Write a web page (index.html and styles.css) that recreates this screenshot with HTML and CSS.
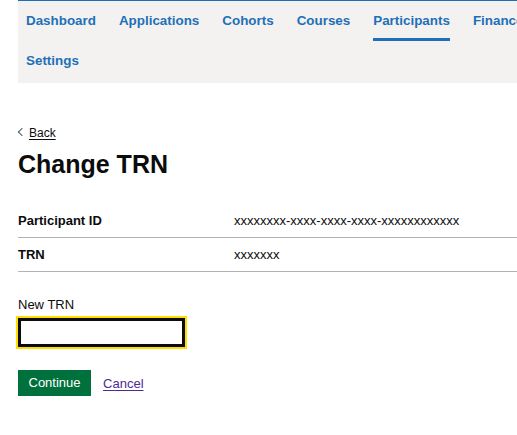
FILE: index.html
```html
<!DOCTYPE html>
<html lang="en">
<head>
<meta charset="utf-8">
<title>Change TRN</title>
<link rel="stylesheet" href="styles.css">
</head>
<body>
<nav class="subnav">
  <ul class="subnav-list">
    <li class="subnav-item"><a class="subnav-link" href="#">Dashboard</a></li>
    <li class="subnav-item"><a class="subnav-link" href="#">Applications</a></li>
    <li class="subnav-item"><a class="subnav-link" href="#">Cohorts</a></li>
    <li class="subnav-item"><a class="subnav-link" href="#">Courses</a></li>
    <li class="subnav-item"><a class="subnav-link is-current" href="#">Participants</a></li>
    <li class="subnav-item"><a class="subnav-link" href="#">Finance</a></li>
    <li class="subnav-item"><a class="subnav-link" href="#">Settings</a></li>
  </ul>
</nav>
<main class="main">
  <a class="back-link" href="#"><span class="chevron"></span>Back</a>
  <h1 class="heading">Change TRN</h1>
  <dl class="summary">
    <div class="summary-row">
      <dt class="summary-key">Participant ID</dt>
      <dd class="summary-value">xxxxxxxx-xxxx-xxxx-xxxx-xxxxxxxxxxxx</dd>
    </div>
    <div class="summary-row">
      <dt class="summary-key">TRN</dt>
      <dd class="summary-value">xxxxxxx</dd>
    </div>
  </dl>
  <form class="form">
    <label class="label" for="trn">New TRN</label>
    <input class="input" id="trn" type="text">
    <div class="actions">
      <button class="button" type="button">Continue</button>
      <a class="link" href="#">Cancel</a>
    </div>
  </form>
</main>
</body>
</html>
```

FILE: styles.css
```css
html, body {
  overflow-x: hidden;
}
body {
  margin: 0;
  font-family: "Liberation Sans", Arial, sans-serif;
  color: #0b0c0c;
  background: #fff;
}
.subnav {
  margin-left: 18px;
  width: 565px;
  background: #f3f2f1;
  border-top: 1px solid #1d70b8;
  padding: 0 0 2px 8px;
  box-sizing: border-box;
}
.subnav-list {
  list-style: none;
  margin: 0;
  padding: 0;
  display: flex;
  flex-wrap: wrap;
  column-gap: 23px;
}
.subnav-item {
  display: block;
}
.subnav-link {
  display: block;
  padding: 10px 0 7px;
  line-height: 20px;
  font-size: 13.4px;
  font-weight: bold;
  color: #1d70b8;
  text-decoration: none;
  border-bottom: 3px solid transparent;
}
.subnav-link.is-current {
  border-bottom-color: #1d70b8;
}
.main {
  padding: 0 0 0 18px;
  margin-top: 38px;
}
.back-link {
  display: inline-flex;
  align-items: center;
  font-size: 12px;
  line-height: 16px;
  color: #0b0c0c;
  text-decoration: underline;
  text-underline-offset: 2px;
}
.chevron {
  display: inline-block;
  width: 5px;
  height: 5px;
  border-left: 1px solid #505a5f;
  border-bottom: 1px solid #505a5f;
  transform: rotate(45deg);
  margin: 0 4px 2px 1px;
}
.heading {
  margin: 8px 0 0;
  font-size: 25px;
  line-height: 30px;
  font-weight: bold;
}
.summary {
  margin: 25px 0 0;
}
.summary-row {
  display: flex;
  border-bottom: 1px solid #b1b4b6;
  padding: 8px 0;
  line-height: 17px;
}
.summary-key {
  width: 216px;
  margin: 0;
  font-size: 13px;
  font-weight: bold;
}
.summary-value {
  margin: 0;
  font-size: 13px;
}
.form {
  margin-top: 24px;
}
.label {
  display: block;
  font-size: 13px;
  line-height: 18px;
}
.input {
  display: block;
  margin-top: 4px;
  width: 167px;
  height: 29px;
  box-sizing: border-box;
  border: 3px solid #0b0c0c;
  outline: 2px solid #ffdd00;
  padding: 2px 4px;
  font: inherit;
  font-size: 13px;
}
.actions {
  display: flex;
  align-items: center;
  gap: 12px;
  margin-top: 23px;
}
.button {
  font-family: inherit;
  font-size: 13px;
  line-height: 16px;
  color: #fff;
  background: #00703c;
  border: 0;
  padding: 5px 10.5px;
  height: 26px;
  box-shadow: 0 2px 0 #002d18;
  border-radius: 0;
}
.link {
  font-size: 13px;
  color: #4c2c92;
  text-decoration: underline;
  text-underline-offset: 2px;
}
```
